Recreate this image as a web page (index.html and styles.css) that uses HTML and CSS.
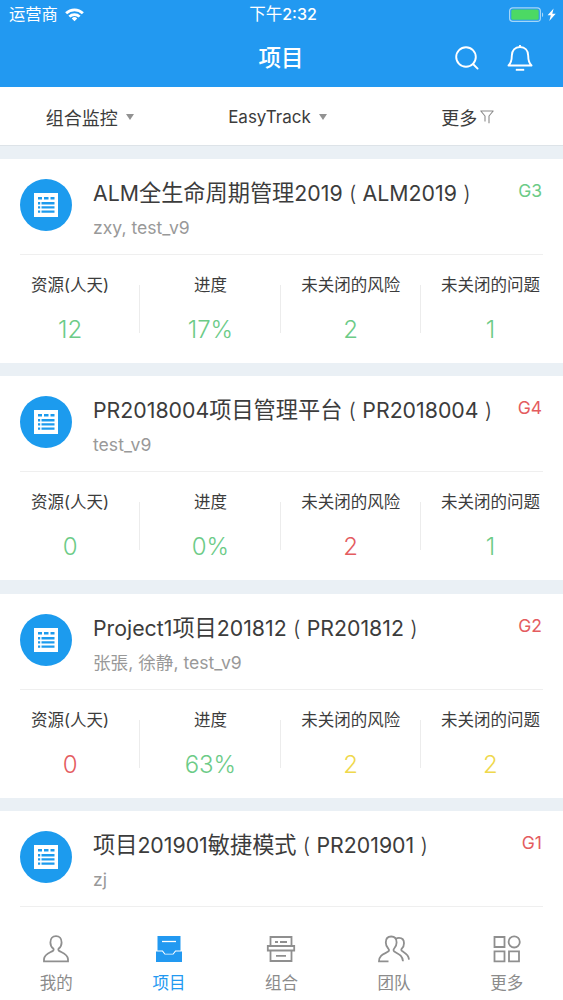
FILE: index.html
```html
<!doctype html>
<html lang="zh-CN">
<head>
  <meta charset="UTF-8">
  <meta name="viewport" content="width=device-width, initial-scale=1.0">
  <title>项目</title>
  <link rel="stylesheet" href="styles.css">
</head>
<body>
  <!-- shared icon for project avatars -->
  <svg class="sprite" width="0" height="0">
    <symbol id="icon-sheet" viewBox="0 0 24 24">
      <path fill="#fff" d="M0 0h24v24H0z"/>
      <path fill="#1c9bee" d="M4 4h4v2.500H4zM10 4h4.500v2.500H10zM16.500 4h4v2.500h-4zM4 9h2.200v2.400H4zM7.500 9h13v2.400h-13zM4 13.200h2.200v2.400H4zM7.500 13.200h13v2.400h-13zM4 17.400h2.200v2.400H4zM7.500 17.400h13v2.400h-13z"/>
    </symbol>
  </svg>

  <div class="app">
    <header class="header">
      <div class="status-bar">
        <div class="carrier">
          <span>运营商</span>
          <svg width="19" height="14" viewBox="0 0 20 14" fill="none" stroke="#fff" stroke-width="2.900">
            <path d="M1.200 5.200a12.500 12.500 0 0 1 17.600 0"/>
            <path d="M4.600 8.700a7.700 7.700 0 0 1 10.800 0"/>
            <path d="M10 13.500l-2.900-2.900a4.100 4.100 0 0 1 5.800 0z" fill="#fff" stroke="none"/>
          </svg>
        </div>
        <div class="clock">下午<span class="en">2:32</span></div>
        <div class="battery">
          <svg width="48" height="16" viewBox="0 0 48 16">
            <rect x=".6" y=".8" width="30.800" height="13.600" rx="3.200" fill="none" stroke="#a5d6f8" stroke-width="1.200"/>
            <rect x="2.300" y="2.500" width="27.400" height="10.200" rx="1.500" fill="#4cd964"/>
            <path d="M33 5.400c1.500.6 1.500 3.900 0 4.500z" fill="#a5d6f8"/>
            <path d="M44.600 1.500l-6 6.700h3.200l-1.500 5.800 6.400-7.300h-3.400z" fill="#fff"/>
          </svg>
        </div>
      </div>
      <div class="nav-bar">
        <h1>项目</h1>
        <div class="nav-actions">
          <svg width="24" height="26" viewBox="0 0 24 26" fill="none" stroke="#fff" stroke-width="1.900" stroke-linecap="round">
            <circle cx="11" cy="12" r="9.800"/>
            <path d="M18 19l4.600 4.600"/>
          </svg>
          <svg width="26" height="28" viewBox="0 0 26 28" fill="none" stroke="#fff" stroke-width="1.900" stroke-linejoin="round">
            <path d="M13 1v2M1.500 21.500c2.700-2.700 3.300-4.900 3.300-9.800 0-5.400 3.200-8.700 8.200-8.700s8.200 3.300 8.200 8.700c0 4.900.6 7.100 3.300 9.800z"/>
            <path d="M8.800 25.800h8.400"/>
          </svg>
        </div>
      </div>
    </header>

    <nav class="filters">
      <div class="filter filter-group">组合监控<i class="caret"></i></div>
      <div class="filter filter-name"><span class="en">EasyTrack</span><i class="caret"></i></div>
      <div class="filter filter-more">更多
        <svg width="14" height="14" viewBox="0 0 14 14" fill="none" stroke="#8a8a8a" stroke-width="1.100" stroke-linejoin="round">
          <path d="M5 11.500V6L.8 1h12.400L9 6v7.200"/>
        </svg>
      </div>
    </nav>

    <main class="list">
      <section class="card">
        <div class="card-head">
          <div class="avatar"><svg width="24" height="24"><use href="#icon-sheet"/></svg></div>
          <div class="info">
            <h2><span class="en">ALM</span>全生命周期管理<span class="en">2019<b>(</b>ALM2019<b>)</b></span></h2>
            <p><span class="en">zxy, test_v9</span></p>
          </div>
          <span class="grade green">G3</span>
        </div>
        <div class="stats">
          <div class="stat"><label>资源(人天)</label><strong class="green">12</strong></div>
          <div class="stat"><label>进度</label><strong class="green">17%</strong></div>
          <div class="stat"><label>未关闭的风险</label><strong class="green">2</strong></div>
          <div class="stat"><label>未关闭的问题</label><strong class="green">1</strong></div>
        </div>
      </section>

      <section class="card">
        <div class="card-head">
          <div class="avatar"><svg width="24" height="24"><use href="#icon-sheet"/></svg></div>
          <div class="info">
            <h2><span class="en">PR2018004</span>项目管理平台<span class="en"><b>(</b>PR2018004<b>)</b></span></h2>
            <p><span class="en">test_v9</span></p>
          </div>
          <span class="grade red">G4</span>
        </div>
        <div class="stats">
          <div class="stat"><label>资源(人天)</label><strong class="green">0</strong></div>
          <div class="stat"><label>进度</label><strong class="green">0%</strong></div>
          <div class="stat"><label>未关闭的风险</label><strong class="red">2</strong></div>
          <div class="stat"><label>未关闭的问题</label><strong class="green">1</strong></div>
        </div>
      </section>

      <section class="card">
        <div class="card-head">
          <div class="avatar"><svg width="24" height="24"><use href="#icon-sheet"/></svg></div>
          <div class="info">
            <h2><span class="en">Project1</span>项目<span class="en">201812<b>(</b>PR201812<b>)</b></span></h2>
            <p>张張<span class="en">, </span>徐静<span class="en">, test_v9</span></p>
          </div>
          <span class="grade red">G2</span>
        </div>
        <div class="stats">
          <div class="stat"><label>资源(人天)</label><strong class="red">0</strong></div>
          <div class="stat"><label>进度</label><strong class="green">63%</strong></div>
          <div class="stat"><label>未关闭的风险</label><strong class="yellow">2</strong></div>
          <div class="stat"><label>未关闭的问题</label><strong class="yellow">2</strong></div>
        </div>
      </section>

      <section class="card">
        <div class="card-head">
          <div class="avatar"><svg width="24" height="24"><use href="#icon-sheet"/></svg></div>
          <div class="info">
            <h2>项目<span class="en">201901</span>敏捷模式<span class="en"><b>(</b>PR201901<b>)</b></span></h2>
            <p><span class="en">zj</span></p>
          </div>
          <span class="grade red">G1</span>
        </div>
      </section>
    </main>

    <footer class="tab-bar">
      <div class="tab">
        <svg width="32" height="30" viewBox="0 0 32 30">
          <path d="M16 2.200c-3.500 0-5.600 2.600-5.600 6.200 0 2.600 1 4.600 2.800 6.100.7.700.6 1.800-.3 2.400-3.300 1.900-8.700 3.300-8.900 8.200v2.200h24v-2.200c-.2-4.900-5.600-6.300-8.900-8.200-.9-.6-1-1.700-.3-2.400 1.800-1.500 2.800-3.500 2.800-6.100 0-3.600-2.100-6.200-5.600-6.200z"/>
        </svg>
        <span>我的</span>
      </div>
      <div class="tab active">
        <svg width="32" height="30" viewBox="0 0 32 30">
          <path class="solid" d="M4.500 2h23v14.500h-5.300l-2.400 3.200h-7.600l-2.400-3.200H4.500zM3 17.400h6.200l2.400 3.200h8.800l2.400-3.200H29V28H3z"/>
          <path class="cut" d="M9 7.500h14"/>
        </svg>
        <span>项目</span>
      </div>
      <div class="tab">
        <svg width="32" height="30" viewBox="0 0 32 30">
          <path d="M5.500 12V3h21v9M2.800 12h26.400v4.500H2.800zM5.500 16.500V27h21V16.500M10 8h3M15 8h7M11 21.800h10"/>
        </svg>
        <span>组合</span>
      </div>
      <div class="tab">
        <svg width="32" height="30" viewBox="0 0 32 30">
          <path d="M10.500 27.300H1c0-7 6.500-7.500 9.500-10 .9-.8.600-1.800-.3-2.800-1.500-1.500-2.400-3.400-2.400-6 0-3.600 2-6 5.400-6s5.400 2.400 5.400 6c0 2.600-1 4.500-2.400 6-.9 1-.9 2.200.1 3 3.600 2.300 8.200 3.600 8.700 9.800"/>
          <path d="M18 4.800c1-.8 1.800-1 3-1 3 0 5 2.100 5 5.400 0 2.300-.8 4.100-2.200 5.400-.8.900-.6 1.900.3 2.500 3.200 2 6.700 3.500 6.900 8.500"/>
        </svg>
        <span>团队</span>
      </div>
      <div class="tab">
        <svg width="32" height="30" viewBox="0 0 32 30">
          <path d="M3.500 3h10v10h-10zM3.500 17.300h10v10h-10zM18 17.300h10v10H18z"/>
          <circle cx="23.200" cy="7.900" r="5.600"/>
        </svg>
        <span>更多</span>
      </div>
    </footer>
  </div>
</body>
</html>
```
FILE: styles.css
```css
* {
  box-sizing: border-box;
}
body {
  margin: 0;
  font-family: Inter, "Noto Sans CJK SC", sans-serif;
  color: #3c3c3c;
  background-color: #eaf0f5;
}
h1, h2, p {
  margin: 0;
  font-weight: normal;
}
.sprite {
  display: block;
}
.app {
  height: 1000px;
  display: flex;
  flex-direction: column;
  overflow: hidden;
}

/* header */
.header {
  height: 87px;
  flex: none;
  background-color: #2299f1;
  color: #fff;
}
.status-bar {
  height: 29px;
  padding: 0 6px 0 9px;
  display: grid;
  grid-template-columns: 1fr auto 1fr;
  align-items: center;
  font-size: 16.500px;
  line-height: 29px;
}
.carrier {
  display: flex;
  align-items: center;
  gap: 7px;
}
.carrier span {
  font-size: 16.300px;
}
.clock .en {
  font-size: 16px;
  font-weight: 500;
}
.battery {
  display: flex;
  justify-content: flex-end;
}
.nav-bar {
  height: 58px;
  padding: 0 30px 0 29px;
  display: grid;
  grid-template-columns: 1fr auto 1fr;
  align-items: center;
}
.nav-bar h1 {
  grid-column: 2;
  font-size: 22.500px;
  font-weight: 500;
  line-height: 56px;
}
.nav-actions {
  display: flex;
  justify-content: flex-end;
  align-items: center;
  gap: 28px;
}

/* filters */
.filters {
  height: 59px;
  flex: none;
  display: grid;
  grid-template-columns: repeat(3, 1fr);
  background-color: #fff;
  border-bottom: 1px solid #dde3e8;
}
.filter {
  display: flex;
  align-items: center;
  justify-content: center;
  padding-top: 1px;
  font-size: 18px;
}
.filter .en {
  font-size: 17px;
}
.filter-group {
  padding-right: 8px;
}
.filter-name {
  padding-right: 8px;
}
.filter-more {
  gap: 3px;
  padding-right: 3px;
}
.caret {
  margin-left: 8px;
  border: 4.500px solid transparent;
  border-top: 6px solid #929292;
  border-bottom: 0;
}

/* project cards */
.list {
  flex: 1;
  min-height: 0;
  padding-top: 13px;
  display: flex;
  flex-direction: column;
  gap: 13.300px;
  overflow: hidden;
}
.card {
  height: 204px;
  flex: none;
  padding: 0 20px;
  background-color: #fff;
}
.card-head {
  height: 96px;
  padding-top: 20px;
  display: flex;
  border-bottom: 1px solid #efefef;
}
.avatar {
  width: 52px;
  height: 52px;
  flex: none;
  display: flex;
  align-items: center;
  justify-content: center;
  border-radius: 50%;
  background-color: #1c9bee;
}
.info {
  flex: 1;
  margin-left: 21px;
  white-space: nowrap;
}
.info h2 {
  font-size: 22.200px;
  line-height: 28px;
}
.info h2 .en {
  font-size: 21.300px;
}
.info h2 b {
  display: inline-block;
  width: 20px;
  font-weight: 300;
  text-align: center;
}
.info p {
  margin-top: 8px;
  color: #999;
  font-size: 17.600px;
  line-height: 26px;
}
.grade {
  margin-right: 1px;
  font-size: 17.500px;
  line-height: 23px;
}
.stats {
  display: grid;
  grid-template-columns: repeat(4, 1fr);
  margin: 0 -18px 0 -20px;
}
.stat {
  height: 107px;
  padding-top: 18px;
  text-align: center;
  background: linear-gradient(#ececec, #ececec) no-repeat right 30px / 1px 48px;
}
.stat:last-child {
  padding-right: 1px;
  background: none;
}
.stat label {
  display: block;
  font-size: 16.500px;
  line-height: 24px;
}
.stat strong {
  display: block;
  margin-top: 17px;
  font-size: 24px;
  font-weight: 300;
  line-height: 32px;
}
.green {
  color: #6ccb87;
}
.red {
  color: #e45c5f;
}
.yellow {
  color: #efd84c;
}

/* bottom tabs */
.tab-bar {
  height: 91px;
  flex: none;
  padding-top: 25px;
  display: grid;
  grid-template-columns: repeat(5, 1fr);
  background-color: #fff;
}
.tab {
  display: flex;
  flex-direction: column;
  align-items: center;
  color: #8b8b8b;
  font-size: 16.500px;
  line-height: 24px;
}
.tab span {
  margin-top: 7px;
}
.tab svg {
  fill: none;
  stroke: #8f8f8f;
  stroke-width: 1.800;
}
.tab.active {
  color: #2299f1;
}
.tab .solid {
  fill: #2299f1;
  stroke: none;
}
.tab .cut {
  stroke: #fff;
  stroke-width: 1.300;
}
```
